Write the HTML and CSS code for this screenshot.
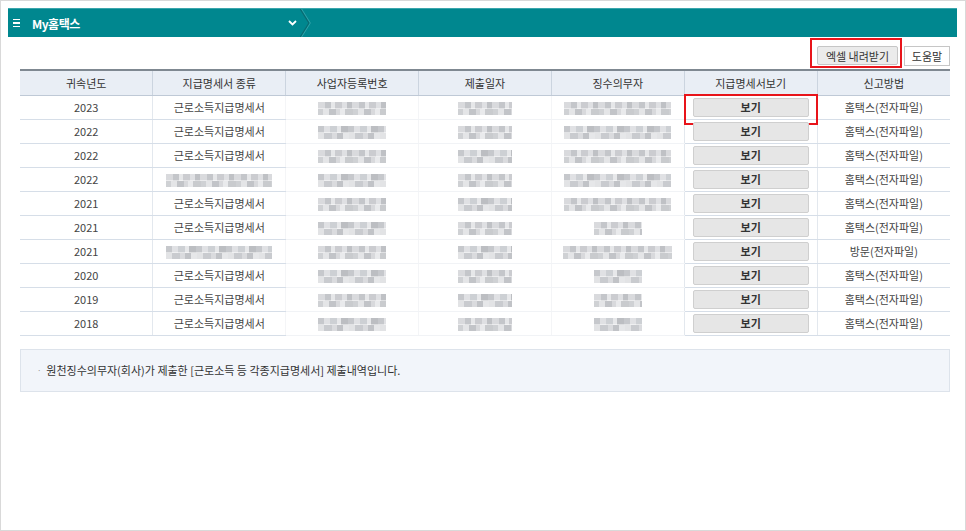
FILE: index.html
```html
<!DOCTYPE html>
<html>
	<head>
		<meta charset="utf-8">
		<title>My홈택스 - 지급명세서 제출내역</title>
		<link rel="stylesheet" href="styles.css">
	</head>
	<body>
		<div class="frame">
			<div class="topbar">
				<div class="menuTitle">
					<span class="burger"><i></i><i></i><i></i></span>
					<span class="titleTxt">My홈택스</span>
					<svg class="caret" width="9" height="6" viewBox="0 0 9 6"><polyline points="1,1 4.5,4.5 8,1" fill="none" stroke="#fff" stroke-width="1.8"/></svg>
				</div>
				<svg class="crumbSep" width="12" height="29" viewBox="0 0 12 29"><polyline points="0,0 9,14.5 0,29" fill="none" stroke="#0b6a71" stroke-width="1.2"/><polyline points="1.5,0 10.5,14.5 1.5,29" fill="none" stroke="#3fa9af" stroke-width="0.8"/></svg>
			</div>

			<div class="content">
				<div class="btnRow">
					<span class="mark"><button class="btn btnGray">엑셀 내려받기</button></span>
					<button class="btn btnWhite">도움말</button>
				</div>

				<table class="list">
					<thead>
						<tr>
							<th>귀속년도</th>
							<th>지급명세서 종류</th>
							<th>사업자등록번호</th>
							<th>제출일자</th>
							<th>징수의무자</th>
							<th>지급명세서보기</th>
							<th>신고방법</th>
						</tr>
					</thead>
					<tbody>
						<tr>
							<td>2023</td><td>근로소득지급명세서</td>
							<td class="mask"><span class="blur bId"></span></td>
							<td class="mask"><span class="blur bDate"></span></td>
							<td class="mask"><span class="blur bL"></span></td>
							<td class="marked"><button class="view">보기</button></td>
							<td>홈택스(전자파일)</td>
						</tr>
						<tr>
							<td>2022</td><td>근로소득지급명세서</td>
							<td class="mask"><span class="blur bId alt"></span></td>
							<td class="mask"><span class="blur bDate"></span></td>
							<td class="mask"><span class="blur bL alt"></span></td>
							<td><button class="view">보기</button></td>
							<td>홈택스(전자파일)</td>
						</tr>
						<tr>
							<td>2022</td><td>근로소득지급명세서</td>
							<td class="mask"><span class="blur bId"></span></td>
							<td class="mask"><span class="blur bDate alt"></span></td>
							<td class="mask"><span class="blur bL"></span></td>
							<td><button class="view">보기</button></td>
							<td>홈택스(전자파일)</td>
						</tr>
						<tr>
							<td>2022</td><td><span class="blur bName"></span></td>
							<td class="mask"><span class="blur bId alt"></span></td>
							<td class="mask"><span class="blur bDate"></span></td>
							<td class="mask"><span class="blur bL alt"></span></td>
							<td><button class="view">보기</button></td>
							<td>홈택스(전자파일)</td>
						</tr>
						<tr>
							<td>2021</td><td>근로소득지급명세서</td>
							<td class="mask"><span class="blur bId"></span></td>
							<td class="mask"><span class="blur bDate alt"></span></td>
							<td class="mask"><span class="blur bL"></span></td>
							<td><button class="view">보기</button></td>
							<td>홈택스(전자파일)</td>
						</tr>
						<tr>
							<td>2021</td><td>근로소득지급명세서</td>
							<td class="mask"><span class="blur bId alt"></span></td>
							<td class="mask"><span class="blur bDate"></span></td>
							<td class="mask"><span class="blur bS"></span></td>
							<td><button class="view">보기</button></td>
							<td>홈택스(전자파일)</td>
						</tr>
						<tr>
							<td>2021</td><td><span class="blur bName alt"></span></td>
							<td class="mask"><span class="blur bId"></span></td>
							<td class="mask"><span class="blur bDate alt"></span></td>
							<td class="mask"><span class="blur bM"></span></td>
							<td><button class="view">보기</button></td>
							<td>방문(전자파일)</td>
						</tr>
						<tr>
							<td>2020</td><td>근로소득지급명세서</td>
							<td class="mask"><span class="blur bId alt"></span></td>
							<td class="mask"><span class="blur bDate"></span></td>
							<td class="mask"><span class="blur bS alt"></span></td>
							<td><button class="view">보기</button></td>
							<td>홈택스(전자파일)</td>
						</tr>
						<tr>
							<td>2019</td><td>근로소득지급명세서</td>
							<td class="mask"><span class="blur bId"></span></td>
							<td class="mask"><span class="blur bDate alt"></span></td>
							<td class="mask"><span class="blur bS"></span></td>
							<td><button class="view">보기</button></td>
							<td>홈택스(전자파일)</td>
						</tr>
						<tr>
							<td>2018</td><td>근로소득지급명세서</td>
							<td class="mask"><span class="blur bId alt"></span></td>
							<td class="mask"><span class="blur bDate"></span></td>
							<td class="mask"><span class="blur bS alt"></span></td>
							<td><button class="view">보기</button></td>
							<td>홈택스(전자파일)</td>
						</tr>
					</tbody>
				</table>

				<div class="notice">
					<span class="dot">ㆍ</span>원천징수의무자(회사)가 제출한 [근로소득 등 각종지급명세서] 제출내역입니다.
				</div>
			</div>
		</div>
	</body>
</html>
```

FILE: styles.css
```css
*{margin:0;padding:0;box-sizing:border-box;}
body{
	font-family:"Noto Sans CJK KR","Noto Sans",sans-serif;
	font-size:11px;
	color:#444;
	background:#fff;
}
.frame{
	width:966px;
	height:531px;
	border:1px solid #d9d9d9;
	padding:7px 8px 0 7px;
}

/* 상단 메뉴바 */
.topbar{
	height:29px;
	background:#00878f;
	border-top:1px solid #3aa6ac;
	display:flex;
	align-items:center;
}
.menuTitle{
	width:292px;
	display:flex;
	align-items:center;
	padding-left:5px;
}
.burger{
	width:7px;
	display:flex;
	flex-direction:column;
	gap:2px;
	margin-right:12px;
}
.burger i{display:block;height:1.5px;background:#fff;}
.titleTxt{
	color:#fff;
	font-weight:bold;
	font-size:12px;
	letter-spacing:-0.5px;
	flex:1;
}
.caret{margin-right:3px;}
.crumbSep{align-self:stretch;height:28px;}

/* 본문 */
.content{margin:0 7px 0 12px;}
.btnRow{
	display:flex;
	justify-content:flex-end;
	align-items:flex-end;
	gap:2px;
	height:32px;
	padding-bottom:3px;
}
.btn{
	font-family:inherit;
	font-size:11px;
	color:#333;
	height:19px;
	border:1px solid #c6c6c6;
	padding:0 6px;
	cursor:pointer;
}
.btnGray{background:#ebebeb;border-radius:2px;width:81px;}
.btnWhite{background:#fff;width:46px;height:20px;}
.mark{
	border:2px solid #e8141a;
	padding:6px 2px 1px 5px;
	margin-bottom:-2px;
	display:flex;
}

.list{
	width:930px;
	border-collapse:collapse;
	table-layout:fixed;
}
.list th{
	height:25px;
	background:#e9eef5;
	border-top:2px solid #7f8891;
	border-bottom:1px solid #bfc9d6;
	border-left:1px solid #cbd4df;
	font-weight:normal;
	color:#333;
	font-size:11px;
}
.list th:first-child,.list td:first-child{border-left:none;}
.list td{
	height:24px;
	text-align:center;
	border-bottom:1px solid #d6dee8;
	border-left:1px solid #e3e8ee;
	color:#444;
	position:relative;
}
.list td.mask{border-bottom-color:#f1f3f6;border-left-color:#f4f5f7;}

/* 가림 처리(모자이크) */
.blur{
	display:inline-block;
	vertical-align:middle;
	height:13px;
	background:
		repeating-linear-gradient(90deg,#d9dadd 0 7px,#c4c6ca 7px 13px,#e6e7e9 13px 17px,#cbccd0 17px 24px,#dfe0e3 24px 29px,#bfc1c5 29px 34px) top/100% 50% no-repeat,
		repeating-linear-gradient(90deg,#cfd1d4 0 5px,#e4e5e7 5px 11px,#c2c4c8 11px 18px,#d8d9dc 18px 22px,#e9eaec 22px 27px,#c9cbce 27px 35px) bottom/100% 50% no-repeat;
	filter:blur(0.7px);
}
.blur.alt{
	background:
		repeating-linear-gradient(90deg,#c6c8cc 0 6px,#e0e1e4 6px 12px,#cdd0d4 12px 19px,#e7e8ea 19px 23px,#bcbec2 23px 30px) top/100% 50% no-repeat,
		repeating-linear-gradient(90deg,#e2e3e5 0 6px,#c9cbcf 6px 14px,#dadbde 14px 19px,#c1c3c7 19px 25px,#e6e7e9 25px 31px) bottom/100% 50% no-repeat;
}
.bId{width:68px;}
.bDate{width:54px;}
.bL{width:107px;}
.bM{width:109px;}
.bS{width:48px;}
.bName{width:106px;}

.view{
	font-family:inherit;
	display:block;
	width:116px;
	height:19px;
	margin:0 auto 0 8px;
	background:#e6e6e6;
	border:1px solid #cfcfcf;
	border-radius:2px;
	font-size:11px;
	font-weight:bold;
	color:#333;
	cursor:pointer;
}
.marked::after{
	content:"";
	position:absolute;
	left:-1px;
	top:-2px;
	width:130px;
	height:27px;
	border:2px solid #e8141a;
}

.notice{
	margin-top:13px;
	height:43px;
	background:#f2f5fa;
	border:1px solid #dde3eb;
	display:flex;
	align-items:center;
	padding-left:14px;
	color:#333;
	font-size:11px;
}
.dot{color:#999;font-size:9px;margin-right:3px;}
```
